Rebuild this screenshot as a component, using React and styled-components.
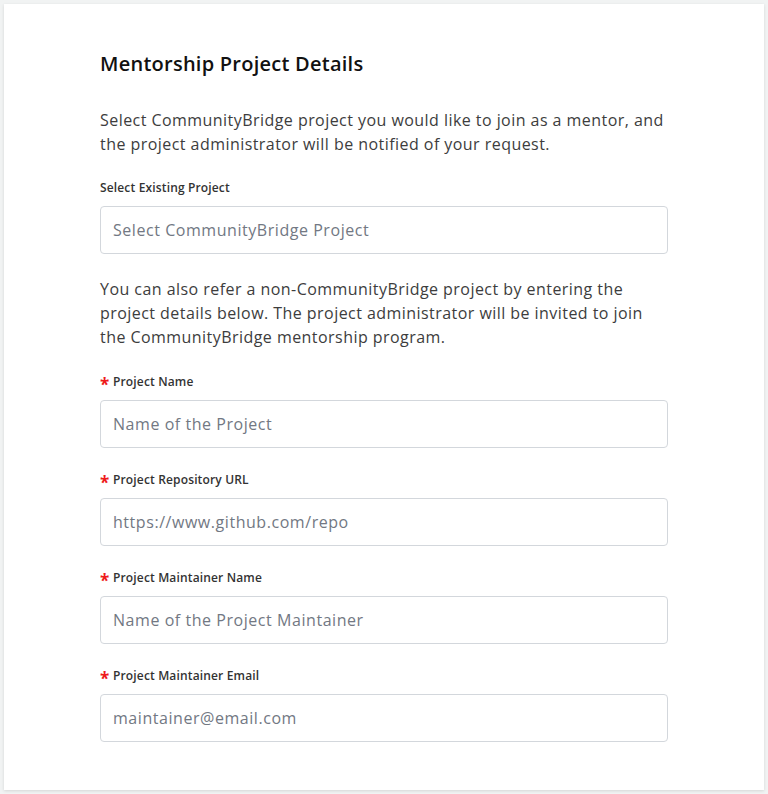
import React from "react";
import styled, { createGlobalStyle } from "styled-components";

const Global = createGlobalStyle`
  html, body { margin: 0; padding: 0; background: #f1f3f3; }
  body { padding: 4px; font-family: "Open Sans", "Noto Sans", sans-serif; }
  * { box-sizing: border-box; }
`;

const Card = styled.div`
  width: 760px;
  height: 786px;
  background: #fff;
  box-shadow: 0 1px 3px rgba(0,0,0,0.12);
  padding: 46px 96px 48px;
`;

const Title = styled.h2`
  margin: 0 0 30px;
  font-size: 20px;
  line-height: 28px;
  font-weight: 600;
  letter-spacing: 0.25px;
  color: #111;
`;

const Text = styled.p`
  margin: 0 0 ${(p) => p.$after || 23}px;
  font-size: 16px;
  line-height: 24px;
  letter-spacing: 0.45px;
  color: #3d3d3d;
`;

const Group = styled.div`
  display: flex;
  flex-direction: column;
  gap: 9px;
  margin-bottom: 23px;
  &:last-child { margin-bottom: 0; }
`;

const Label = styled.label`
  display: flex;
  align-items: center;
  height: 18px;
  font-size: 12px;
  line-height: 18px;
  font-weight: 600;
  letter-spacing: 0.15px;
  color: #333;
`;

const Star = styled.span`
  color: #ee1b1b;
  font-size: 17px;
  font-weight: 700;
  width: 13px;
  line-height: 18px;
  transform: translateY(3px);
`;

const Input = styled.input`
  width: 568px;
  height: 48px;
  border: 1px solid #d3d7dc;
  border-radius: 4px;
  padding: 0 12px;
  font-family: inherit;
  font-size: 16px;
  letter-spacing: 0.55px;
  color: #333;
  background: #fff;
  &::placeholder { color: #727883; }
`;

const fields = [
  { label: "Project Name", ph: "Name of the Project" },
  { label: "Project Repository URL", ph: "https://www.github.com/repo" },
  { label: "Project Maintainer Name", ph: "Name of the Project Maintainer" },
  { label: "Project Maintainer Email", ph: "maintainer@email.com" },
];

export default function App() {
  return (
    <>
      <Global />
      <Card>
        <Title>Mentorship Project Details</Title>
        <Text>
          Select CommunityBridge project you would like to join as a mentor, and
          the project administrator will be notified of your request.
        </Text>
        <Group>
          <Label>Select Existing Project</Label>
          <Input placeholder="Select CommunityBridge Project" />
        </Group>
        <Text $after={24}>
          You can also refer a non-CommunityBridge project by entering the
          project details below. The project administrator will be invited to
          join the CommunityBridge mentorship program.
        </Text>
        {fields.map((f) => (
          <Group key={f.label}>
            <Label>
              <Star>*</Star>
              {f.label}
            </Label>
            <Input placeholder={f.ph} />
          </Group>
        ))}
      </Card>
    </>
  );
}
